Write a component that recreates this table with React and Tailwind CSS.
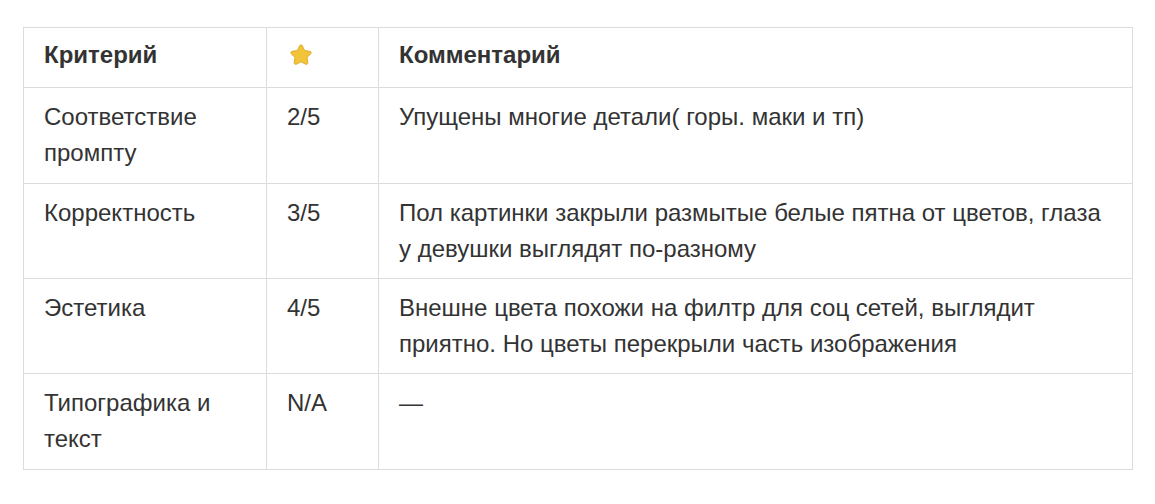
const rows = [
  { k: ['Соответствие', 'промпту'], s: '2/5', c: ['Упущены многие детали( горы. маки и тп)'], pb: 'pb-[12px]' },
  { k: ['Корректность'], s: '3/5', c: ['Пол картинки закрыли размытые белые пятна от цветов, глаза', 'у девушки выглядят по-разному'], pb: 'pb-[11px]' },
  { k: ['Эстетика'], s: '4/5', c: ['Внешне цвета похожи на филтр для соц сетей, выглядит', 'приятно. Но цветы перекрыли часть изображения'], pb: 'pb-[11px]' },
  { k: ['Типографика и', 'текст'], s: 'N/A', c: ['—'], pb: 'pb-[12px]' },
]

function Star() {
  return (
    <svg width="26" height="26" viewBox="0 0 24 24" className="block">
      <path
        d="M12 2.6c.6 0 1 .4 1.3 1l2.1 4.3 4.7.7c1.2.2 1.6 1.6.8 2.4l-3.4 3.3.8 4.7c.2 1.2-1 2.1-2.1 1.5L12 18.3l-4.2 2.2c-1.1.6-2.3-.3-2.1-1.5l.8-4.7-3.4-3.3c-.8-.8-.4-2.2.8-2.4l4.7-.7 2.1-4.3c.3-.6.7-1 1.3-1z"
        fill="#f2c43a"
        stroke="#d9a520"
        strokeWidth="0.8"
      />
    </svg>
  )
}

export default function App() {
  return (
    <div className="w-[1155px] h-[504px] bg-white pt-[27px] pl-[23px] font-['Liberation_Sans',Arial,sans-serif] text-[24px] leading-[36px] text-[#333]">
      <table className="border-collapse table-fixed w-[1110px]">
        <colgroup>
          <col className="w-[243px]" />
          <col className="w-[112px]" />
          <col />
        </colgroup>
        <thead>
          <tr>
            <th className="border border-[#dcdcdc] px-5 pt-[9px] pb-[14px] text-left align-top font-bold">Критерий</th>
            <th className="border border-[#dcdcdc] px-5 pt-[9px] pb-[14px] text-left align-top">
              <div className="h-[36px] flex items-center pl-[1px]"><Star /></div>
            </th>
            <th className="border border-[#dcdcdc] px-5 pt-[9px] pb-[14px] text-left align-top font-bold">Комментарий</th>
          </tr>
        </thead>
        <tbody>
          {rows.map((r, i) => (
            <tr key={i}>
              <td className={`border border-[#dcdcdc] px-5 pt-[11px] ${r.pb} align-top`}>
                {r.k.map((t, j) => <div key={j}>{t}</div>)}
              </td>
              <td className={`border border-[#dcdcdc] px-5 pt-[11px] ${r.pb} align-top`}>{r.s}</td>
              <td className={`border border-[#dcdcdc] px-5 pt-[11px] ${r.pb} align-top`}>
                {r.c.map((t, j) => <div key={j}>{t}</div>)}
              </td>
            </tr>
          ))}
        </tbody>
      </table>
    </div>
  )
}
